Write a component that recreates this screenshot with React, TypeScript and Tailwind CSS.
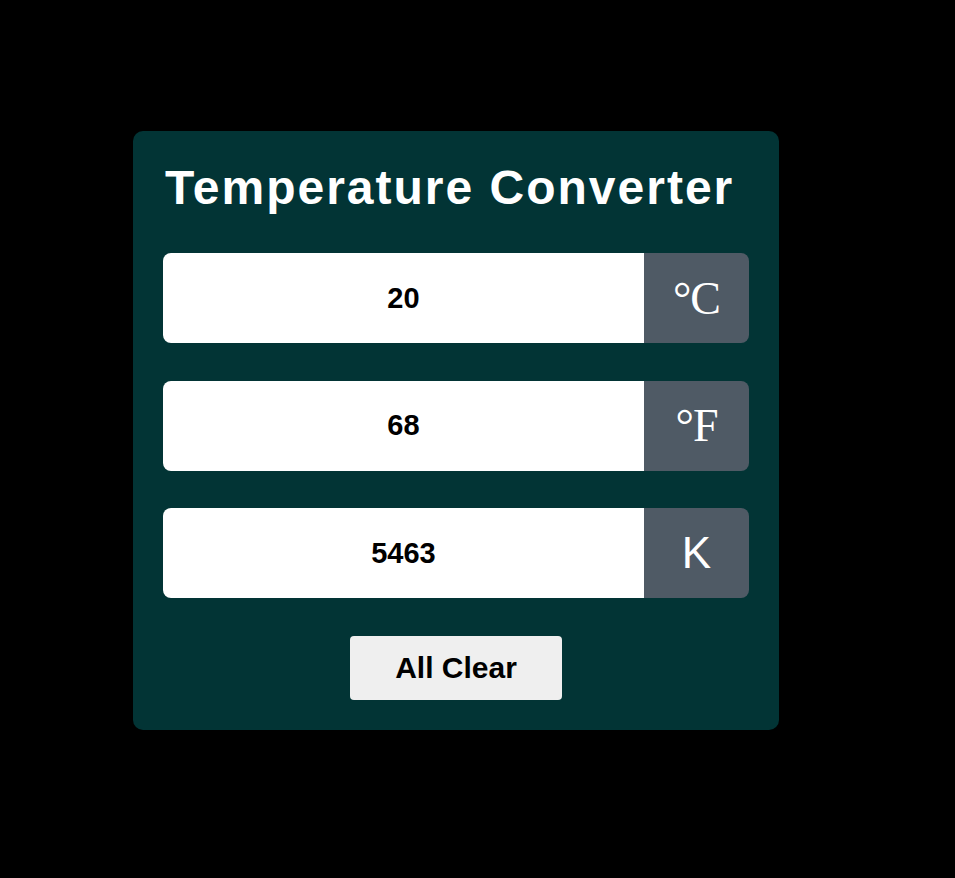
import { useState } from "react";

const unitBox = "flex w-[105px] items-center justify-center bg-[#4f5a65] text-white";

const App = () => {
  const [vals, setVals] = useState<Record<string, string>>({ c: "20", f: "68", k: "5463" });

  const field = (key: string, focus = false) => (
    <input
      autoFocus={focus}
      value={vals[key]}
      onChange={(e) => setVals({ ...vals, [key]: e.target.value })}
      className="h-full flex-1 bg-white text-center text-[29px] font-bold text-black outline-none"
    />
  );

  return (
    <div className="min-h-[878px] w-full bg-black pt-[131px] pl-[133px] font-['Liberation_Sans',Arial,sans-serif]">
      <div className="w-[646px] rounded-[10px] bg-[#023435] px-[30px] pb-[30px] pt-[29px]">
        <h1 className="pl-[2px] text-[48px] font-bold leading-[56px] tracking-[2px] text-white">
          Temperature Converter
        </h1>

        <div className="mt-[37px] flex flex-col gap-[37.5px]">
          <div className="flex h-[90px] overflow-hidden rounded-[8px]">
            {field("c", true)}
            <div className={unitBox}>
              <span className="font-['Times_New_Roman',Times,serif] text-[46px] tracking-[-1px]">°C</span>
            </div>
          </div>
          <div className="flex h-[90px] overflow-hidden rounded-[8px]">
            {field("f")}
            <div className={unitBox}>
              <span className="font-['Times_New_Roman',Times,serif] text-[46px] tracking-[-1px]">°F</span>
            </div>
          </div>
          <div className="flex h-[90px] overflow-hidden rounded-[8px]">
            {field("k")}
            <div className={unitBox}>
              <span className="text-[44px]">K</span>
            </div>
          </div>
        </div>

        <div className="mt-[37.5px] flex justify-center">
          <button
            onClick={() => setVals({ c: "", f: "", k: "" })}
            className="h-[64px] w-[212px] rounded-[4px] bg-[#efefef] text-[30px] font-bold text-black"
          >
            All Clear
          </button>
        </div>
      </div>
    </div>
  );
};

export default App;
